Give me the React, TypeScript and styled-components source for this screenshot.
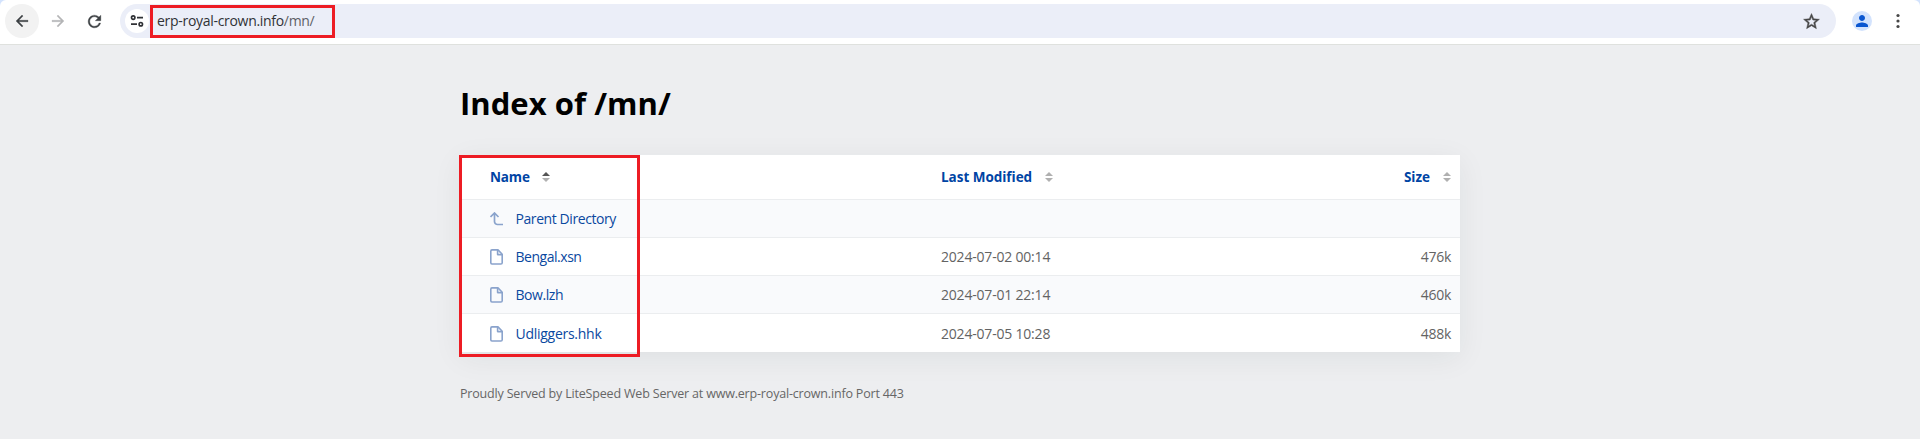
import React from "react";
import styled, { createGlobalStyle } from "styled-components";
import { MdArrowBack, MdArrowForward, MdRefresh, MdStarBorder, MdPerson } from "react-icons/md";

const Global = createGlobalStyle`
  * { box-sizing: border-box; }
  body { margin: 0; background: #edeef0; font-family: "Open Sans", "Noto Sans", sans-serif; }
`;

const Page = styled.div`
  height: 439px;
  overflow: hidden;
  background: #edeef0;
`;

const Chrome = styled.div`
  background: #d3e3fd;
`;

const Toolbar = styled.header`
  height: 45px;
  display: flex;
  align-items: flex-start;
  padding: 4px 5px 0;
  background: #fff;
  border-bottom: 1px solid #dfe1de;
  border-radius: 6px 6px 0 0;
`;

const NavButton = styled.span<{ $active?: boolean; $color?: string }>`
  width: 34px;
  height: 34px;
  margin-right: 2px;
  border-radius: 50%;
  display: flex;
  align-items: center;
  justify-content: center;
  background: ${(p) => (p.$active ? "#f2f2f2" : "transparent")};
  color: ${(p) => p.$color ?? "#3c4043"};
  path:not([fill="none"]) { stroke: currentColor; stroke-width: 0.4px; }
`;

const Omnibox = styled.div`
  width: 1716px;
  height: 34px;
  margin-left: 7px;
  padding: 0 15px 0 5px;
  border-radius: 17px;
  background: #ebeef8;
  display: flex;
  align-items: center;
  color: #474747;
`;

const StarIcon = styled(MdStarBorder)`
  path:not([fill="none"]) { stroke: currentColor; stroke-width: 0.6px; }
`;

const SiteInfo = styled.span`
  width: 24px;
  height: 24px;
  border-radius: 50%;
  background: #fff;
  display: flex;
  align-items: center;
  justify-content: center;
`;

const Url = styled.div`
  position: relative;
  flex: 1;
  padding-left: 8px;
  font-size: 14px;
  line-height: 20px;
  letter-spacing: -0.3px;
  color: #303236;
  span { color: #5d6066; }
`;

const Highlight = styled.div<{ $w: number; $h: number; $x: number; $y: number }>`
  position: absolute;
  left: ${(p) => p.$x}px;
  top: ${(p) => p.$y}px;
  width: ${(p) => p.$w}px;
  height: ${(p) => p.$h}px;
  border: 3px solid #ed1c24;
`;

const Avatar = styled.span`
  width: 20px;
  height: 20px;
  margin: 7px 0 0 16px;
  border-radius: 50%;
  background: #d3e3fd;
  color: #0b57d0;
  display: flex;
  align-items: center;
  justify-content: center;
`;

const MenuDots = styled.svg`
  margin: 9px 0 0 23px;
`;

const Content = styled.main`
  width: 1000px;
  margin: 0 auto;
  padding-top: 36px;
`;

const Title = styled.h1`
  margin: 0;
  height: 74px;
  font-size: 31px;
  line-height: 44px;
  font-weight: 700;
  letter-spacing: 0.04px;
  color: #000;
`;

const Listing = styled.section`
  position: relative;
  background: #fff;
  box-shadow: 0 6px 28px rgba(0, 40, 50, 0.065);
`;

const Row = styled.div<{ $head?: boolean; $shade?: boolean }>`
  display: grid;
  grid-template-columns: 451px 1fr 160px;
  align-items: center;
  height: ${(p) => (p.$head ? 45 : 38)}px;
  padding: 0 9px 0 30px;
  background: ${(p) => (p.$shade ? "#f9fafc" : "#fff")};
  border-bottom: 1px solid #ebedef;
  &:last-of-type {
    padding-top: 2px;
    border-bottom: 0;
  }
`;

const Heading = styled.div<{ $end?: boolean; $gap?: number; $track: number }>`
  display: flex;
  align-items: center;
  justify-content: ${(p) => (p.$end ? "flex-end" : "flex-start")};
  gap: ${(p) => p.$gap ?? 13}px;
  font-size: 13.5px;
  line-height: 20px;
  font-weight: 700;
  letter-spacing: ${(p) => p.$track}px;
  color: #0044a4;
`;

const FileLink = styled.div<{ $track: number }>`
  display: flex;
  align-items: center;
  gap: 12.5px;
  font-size: 14px;
  line-height: 20px;
  letter-spacing: ${(p) => p.$track}px;
  color: #0a48a0;
`;

const Meta = styled.div<{ $end?: boolean }>`
  font-size: 14px;
  line-height: 20px;
  letter-spacing: ${(p) => (p.$end ? -0.3 : -0.2)}px;
  text-align: ${(p) => (p.$end ? "right" : "left")};
  color: #636363;
`;

const Footer = styled.footer`
  margin-top: 33px;
  font-size: 12.5px;
  line-height: 18px;
  letter-spacing: -0.18px;
  color: #666;
`;

const TuneIcon = () => (
  <svg width="14" height="12" viewBox="0 0 14 12" fill="none" stroke="#303236" strokeWidth="1.7">
    <circle cx="3.2" cy="2.6" r="1.7" />
    <path d="M7 2.6h6M1 9.2h6" />
    <circle cx="10.8" cy="9.2" r="1.7" />
  </svg>
);

const SortIcon = ({ asc }: { asc?: boolean }) => (
  <svg width="8" height="10" viewBox="0 0 8 10">
    <path d="M4 0L8 4H0z" fill={asc ? "#555" : "#b0b0b0"} />
    <path d="M0 6h8L4 10z" fill="#b0b0b0" />
  </svg>
);

const FileIcon = () => (
  <svg width="13" height="16" viewBox="0 0 13 16" fill="none" stroke="#8aa3cc" strokeWidth="1.6" strokeLinejoin="round">
    <path d="M2 .9h6L12.2 5.2v8.5a1.3 1.3 0 0 1-1.3 1.3H2A1.3 1.3 0 0 1 .8 13.7V2.2A1.3 1.3 0 0 1 2 .9z" />
    <path d="M7.6 1v4.6h4.5" />
  </svg>
);

const ParentIcon = () => (
  <svg width="13" height="14" viewBox="0 0 13 14" fill="none" stroke="#8aa3cc" strokeWidth="1.7">
    <path d="M.5 5L4.5 1l4 4M4.5 1v8.5a3 3 0 0 0 3 3H13" />
  </svg>
);

const files = [
  { name: "Bengal.xsn", date: "2024-07-02 00:14", size: "476k", track: -0.47 },
  { name: "Bow.lzh", date: "2024-07-01 22:14", size: "460k", track: -0.45 },
  { name: "Udliggers.hhk", date: "2024-07-05 10:28", size: "488k", track: -0.27 },
];

export default function App() {
  return (
    <Page>
      <Global />
      <Chrome>
        <Toolbar>
          <NavButton $active><MdArrowBack size={18} /></NavButton>
          <NavButton $color="#b4b5b6"><MdArrowForward size={18} /></NavButton>
          <NavButton><MdRefresh size={19} /></NavButton>
          <Omnibox>
            <SiteInfo><TuneIcon /></SiteInfo>
            <Url>
              erp-royal-crown.info<span>/mn/</span>
              <Highlight $x={1} $y={-6} $w={185} $h={33} />
            </Url>
            <StarIcon size={19} />
          </Omnibox>
          <Avatar><MdPerson size={18} /></Avatar>
          <MenuDots width="6" height="16" viewBox="0 0 6 16" fill="#474747">
            <circle cx="3" cy="2.5" r="1.6" />
            <circle cx="3" cy="8" r="1.6" />
            <circle cx="3" cy="13.5" r="1.6" />
          </MenuDots>
        </Toolbar>
      </Chrome>
      <Content>
        <Title>Index of /mn/</Title>
        <Listing>
          <Row $head>
            <Heading $track={-0.15} $gap={12}>Name <SortIcon asc /></Heading>
            <Heading $track={-0.03}>Last Modified <SortIcon /></Heading>
            <Heading $track={0} $end>Size <SortIcon /></Heading>
          </Row>
          <Row $shade>
            <FileLink $track={-0.42}><ParentIcon />Parent Directory</FileLink>
          </Row>
          {files.map((f, i) => (
            <Row key={f.name} $shade={i % 2 === 1}>
              <FileLink $track={f.track}><FileIcon />{f.name}</FileLink>
              <Meta>{f.date}</Meta>
              <Meta $end>{f.size}</Meta>
            </Row>
          ))}
          <Highlight as="span" $x={-1} $y={0} $w={181} $h={202} />
        </Listing>
        <Footer>Proudly Served by LiteSpeed Web Server at www.erp-royal-crown.info Port 443</Footer>
      </Content>
    </Page>
  );
}
